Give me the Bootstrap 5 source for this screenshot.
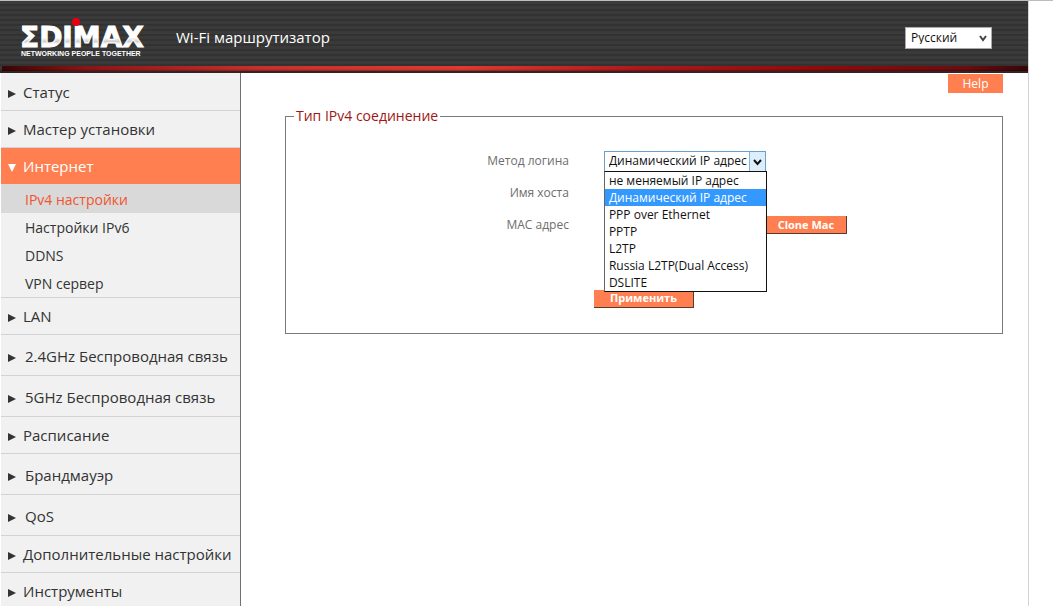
<!DOCTYPE html>
<html lang="ru">
<head>
<meta charset="utf-8">
<meta name="viewport" content="width=device-width, initial-scale=1">
<title>EDIMAX Wi-Fi маршрутизатор</title>
<link href="https://cdn.jsdelivr.net/npm/bootstrap@5.3.0/dist/css/bootstrap.min.css" rel="stylesheet">
<style>
body{font-family:"Open Sans","Noto Sans",sans-serif;font-size:15px;background:#fff;color:#333;border-top:1px solid #b9bfbc;overflow-x:hidden}
body::-webkit-scrollbar{display:none}
.page-shell{margin-right:24px;border-right:1px solid #d5d5d5}
.topbar{height:72px;background:repeating-linear-gradient(#3a3a3a 0 3px,#323232 3px 5px);border-bottom:2px solid #302426}
.topbar-row{height:65px;padding:8px 36px 0 20px}
.topbar-line{height:5px;margin-left:2px;background:linear-gradient(#0000 60%,#0005),linear-gradient(90deg,#3a0505,#8c1414 8%,#c8302a 25%,#e0392f 45%,#b01818 62%,#900a0a 80%,#6c0c10 94%,#3a0508)}
.brand-title{color:#fff;font-size:15px;margin-left:24px}
.lang-select{width:87px;height:22px;border:1px solid #aaa;background:#fff;color:#111;font-size:12px;padding:0 20px 0 5px}
.pick-wrap{position:relative;display:inline-block;line-height:1}
.pick-wrap svg{position:absolute;pointer-events:none}
.lang-arrow{right:5px;top:8px}
.method-arrow{right:1px;top:1px}
select{appearance:none;border-radius:0}
.side{width:240px;flex:none;background:#f1f1f1;border-right:1px solid #707070;margin-left:1px;padding-top:1px}
.side a{color:#333;text-decoration:none}
.side-item{height:37px;border-bottom:1px solid #d2d2d2;padding:0 0 0 7px;gap:7px;font-size:15px}
.side-item.tall{height:41px;gap:9px;padding-top:2px}
.side-item svg{flex:none;margin-top:3px}
.side .side-item.open{background:#ff7f50;color:#fff;height:36px;border:0}
.side-sub{border-bottom:1px solid #d2d2d2}
.side-sub a{display:block;height:28px;line-height:30px;padding-left:24px;font-size:14px}
.side-sub a.current{height:29px;line-height:31px;background:#d9d9d9;color:#f2542d}
.main-area{padding:1px 25px 0 44px}
.flat-btn{background:#ff7f50;color:#fff;border:0;border-radius:0;padding:0;font-size:12px}
.help-btn{width:55px;height:19px}
.raised{font-weight:700;font-size:11px;height:18px;line-height:16px;border-right:1px solid #5c3a30;border-bottom:1px solid #5c3a30}
.clone-btn{width:81px}
.conn-set{border:1px solid #7a7a7a;height:228px;margin-top:13px;padding:0 0 0 8px}
.conn-set legend{float:none;width:auto;margin:0;padding:0 2px;font-size:14px;line-height:20px;color:#a01515}
.form-line{height:32px;gap:35px}
.form-line label{width:39%;text-align:right;font-size:12px;color:#6e6e6e}
.form-area{margin:19px 0 0 -2px}
.submit-line{margin-top:44px;padding-right:8px}
.method{width:162px;height:21px;border:1px solid #6aa0d0;background:#fff;color:#111;font-size:12px;padding:0 17px 0 4px}
.field-box{width:150px;height:20px;border:1px solid #999;font-size:12px}
.choices{position:absolute;z-index:5;left:0;top:20px;width:163px;margin:0;padding:0;list-style:none;background:#fff;border:1px solid #111;border-left-color:#666;color:#111;font-size:12px}
.choices li{height:17px;line-height:17px;padding-left:4px;white-space:nowrap}
.choices li.chosen{background:#3399ff;color:#fff}
</style>
</head>
<body>
<div class="page-shell">
<header class="topbar">
<div class="topbar-row d-flex align-items-center">
<svg width="132" height="42" viewBox="0 0 132 42" role="img" aria-label="EDIMAX Networking people together">
<defs><linearGradient id="metal" x1="0" y1="0" x2="0" y2="1"><stop offset=".5" stop-color="#fff"/><stop offset=".62" stop-color="#cfcfcf"/><stop offset=".7" stop-color="#fff"/></linearGradient></defs>
<text x="0" y="30" font-family="DejaVu Sans" font-weight="700" font-size="28" fill="url(#metal)" stroke="#fff" stroke-width="1">ΣDIMAX</text>
<circle cx="56" cy="5" r="4" fill="#e60012"/>
<text x="1" y="39" font-family="Liberation Sans" font-weight="700" font-size="7" fill="#fff">NETWORKING PEOPLE TOGETHER</text>
</svg>
<span class="brand-title">Wi-Fi маршрутизатор</span>
<span class="pick-wrap ms-auto">
<select class="lang-select" aria-label="Язык"><option>Русский</option></select>
<svg class="lang-arrow" width="8" height="7" viewBox="0 0 8 7"><path d="M1 1l3 4 3-4" fill="none" stroke="#444" stroke-width="2"/></svg>
</span>
</div>
<div class="topbar-line"></div>
</header>
<div class="d-flex">
<nav class="side" aria-label="Меню">
<a href="#" class="side-item d-flex align-items-center"><svg width="8" height="8"><path d="M0 0L8 4 0 8z" fill="#333"/></svg>Статус</a>
<a href="#" class="side-item d-flex align-items-center"><svg width="8" height="8"><path d="M0 0L8 4 0 8z" fill="#333"/></svg>Мастер установки</a>
<a href="#" class="side-item open d-flex align-items-center"><svg width="8" height="8"><path d="M0 0H8L4 8z" fill="#fff"/></svg>Интернет</a>
<div class="side-sub">
<a href="#" class="current">IPv4 настройки</a>
<a href="#">Настройки IPv6</a>
<a href="#">DDNS</a>
<a href="#">VPN сервер</a>
</div>
<a href="#" class="side-item d-flex align-items-center"><svg width="8" height="8"><path d="M0 0L8 4 0 8z" fill="#333"/></svg>LAN</a>
<a href="#" class="side-item tall d-flex align-items-center"><svg width="8" height="8"><path d="M0 0L8 4 0 8z" fill="#333"/></svg>2.4GHz Беспроводная связь</a>
<a href="#" class="side-item tall d-flex align-items-center"><svg width="8" height="8"><path d="M0 0L8 4 0 8z" fill="#333"/></svg>5GHz Беспроводная связь</a>
<a href="#" class="side-item d-flex align-items-center"><svg width="8" height="8"><path d="M0 0L8 4 0 8z" fill="#333"/></svg>Расписание</a>
<a href="#" class="side-item tall d-flex align-items-center"><svg width="8" height="8"><path d="M0 0L8 4 0 8z" fill="#333"/></svg>Брандмауэр</a>
<a href="#" class="side-item tall d-flex align-items-center"><svg width="8" height="8"><path d="M0 0L8 4 0 8z" fill="#333"/></svg>QoS</a>
<a href="#" class="side-item d-flex align-items-center"><svg width="8" height="8"><path d="M0 0L8 4 0 8z" fill="#333"/></svg>Дополнительные настройки</a>
<a href="#" class="side-item d-flex align-items-center"><svg width="8" height="8"><path d="M0 0L8 4 0 8z" fill="#333"/></svg>Инструменты</a>
</nav>
<main class="main-area flex-grow-1">
<div class="d-flex justify-content-end"><button type="button" class="flat-btn help-btn">Help</button></div>
<form>
<fieldset class="conn-set">
<legend>Тип IPv4 соединение</legend>
<div class="form-area">
<div class="form-line d-flex align-items-center">
<label for="method">Метод логина</label>
<span class="pick-wrap">
<select id="method" class="method"><option>Динамический IP адрес</option></select>
<svg class="method-arrow" width="16" height="19" viewBox="0 0 16 19"><path d="M0 0h16v19H0z" fill="#dceefb"/><path d="M.5 0v19" stroke="#7eb4dc"/><path d="M5 8l3.500 4L12 8" fill="none" stroke="#111" stroke-width="2"/></svg>
<ul class="choices" role="listbox" aria-label="Метод логина">
<li role="option">не меняемый IP адрес</li>
<li role="option" class="chosen" aria-selected="true">Динамический IP адрес</li>
<li role="option">PPP over Ethernet</li>
<li role="option">PPTP</li>
<li role="option">L2TP</li>
<li role="option">Russia L2TP(Dual Access)</li>
<li role="option">DSLITE</li>
</ul>
</span>
</div>
<div class="form-line d-flex align-items-center"><label for="host">Имя хоста</label><input id="host" class="field-box" type="text"></div>
<div class="form-line d-flex align-items-center"><label for="mac">MAC адрес</label><div class="d-flex align-items-center gap-2"><input id="mac" class="field-box" type="text"><button type="button" class="flat-btn raised clone-btn ms-1">Clone Mac</button></div></div>
</div>
<div class="submit-line text-center"><button type="submit" class="flat-btn raised px-3">Применить</button></div>
</fieldset>
</form>
</main>
</div>
</div>
<script src="https://cdn.jsdelivr.net/npm/bootstrap@5.3.0/dist/js/bootstrap.bundle.min.js"></script>
</body>
</html>
